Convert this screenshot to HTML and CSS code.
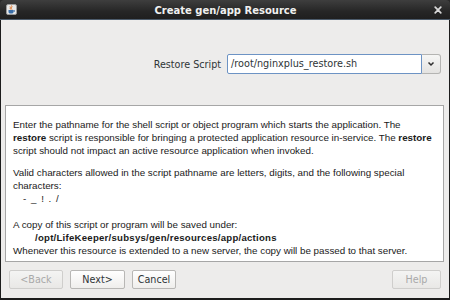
FILE: index.html
```html
<!DOCTYPE html>
<html>
<head>
<meta charset="utf-8">
<link rel="stylesheet" href="styles.css">
</head>
<body>
<div class="window">
  <div class="titlebar">
    <div class="app-icon">
      <svg width="11" height="11" viewBox="0 0 11 11">
        <rect x="0.5" y="0.5" width="10" height="10" rx="1.5" fill="#e8e8e8" stroke="#9a9a9a"/>
        <path d="M5.5 1.5 C7 3 4 4 6 5.5 M4 2.5 C5 4 3.5 4.5 4.8 5.5" stroke="#e07020" stroke-width="1" fill="none"/>
        <path d="M2.5 6 H7.5 V8 C7.5 9 6.5 9.5 5 9.5 C3.5 9.5 2.5 9 2.5 8 Z" fill="#3a6ea8"/>
        <path d="M7.5 6.5 H8.5 V7.5 H7.5" stroke="#3a6ea8" stroke-width="0.8" fill="none"/>
      </svg>
    </div>
    <div class="title">Create gen/app Resource</div>
    <div class="close">
      <svg width="8" height="8" viewBox="0 0 8 8">
        <path d="M1.2 1.2 L6.8 6.8 M6.8 1.2 L1.2 6.8" stroke="#d8d8d8" stroke-width="1.7" stroke-linecap="round"/>
      </svg>
    </div>
  </div>
  <div class="content">
    <div class="field-row">
      <span class="field-label">Restore Script</span>
      <div class="combo">
        <div class="combo-input">/root/nginxplus_restore.sh</div>
        <div class="combo-btn">
          <svg width="8" height="6" viewBox="0 0 8 6">
            <path d="M1.5 1.5 L4 4 L6.5 1.5" stroke="#2e2e2e" stroke-width="1.5" fill="none"/>
          </svg>
        </div>
      </div>
    </div>
    <div class="info">
      <p class="para p1">Enter the pathname for the shell script or object program which starts the application. The<br><b>restore</b> script is responsible for bringing a protected application resource in-service. The <b>restore</b><br>script should not impact an active resource application when invoked.</p>
      <p class="para p2">Valid characters allowed in the script pathname are letters, digits, and the following special<br>characters:<br><span class="chars">- _ ! . /</span></p>
      <p class="para p3">A copy of this script or program will be saved under:<br><b class="path">/opt/LifeKeeper/subsys/gen/resources/app/actions</b><br>Whenever this resource is extended to a new server, the copy will be passed to that server.</p>
    </div>
    <div class="buttons">
      <div class="btn disabled back">&lt;Back</div>
      <div class="btn next">Next&gt;</div>
      <div class="btn cancel">Cancel</div>
      <div class="spacer"></div>
      <div class="btn disabled help">Help</div>
    </div>
  </div>
</div>
</body>
</html>
```

FILE: styles.css
```css
html, body {
  margin: 0;
  padding: 0;
  width: 450px;
  height: 300px;
  overflow: hidden;
  background: #2a2a2a;
}

.window {
  width: 450px;
  height: 300px;
  box-sizing: border-box;
  display: flex;
  flex-direction: column;
  background: #1c1c1c;
  border-radius: 4px 4px 0 0;
  padding: 0 1px 2px 1px;
}

.titlebar {
  height: 20px;
  flex: none;
  display: flex;
  align-items: center;
  background: linear-gradient(#3e3e3e, #262626 60%, #1f1f1f);
  border-bottom: 1px solid #4d5c6c;
  box-sizing: border-box;
  border-radius: 4px 4px 0 0;
  margin: 0 -1px;
  padding: 0 6px 0 6px;
}

.app-icon {
  width: 11px;
  height: 11px;
  display: flex;
}

.title {
  flex: 1;
  text-align: center;
  color: #f0f0f0;
  font-family: "DejaVu Sans", sans-serif;
  font-weight: bold;
  font-size: 10px;
  padding-top: 1px;
}

.close {
  width: 8px;
  height: 8px;
  display: flex;
  margin-right: 2px;
}

.content {
  flex: 1;
  background: #edeceb;
  display: flex;
  flex-direction: column;
  font-family: "DejaVu Sans", sans-serif;
}

.field-row {
  margin-top: 34px;
  height: 20px;
  display: flex;
  justify-content: flex-end;
  align-items: center;
  padding-right: 8px;
}

.field-label {
  font-size: 9.6px;
  color: #2e3436;
  margin-right: 6px;
}

.combo {
  display: flex;
  height: 20px;
}

.combo-input {
  width: 195px;
  height: 20px;
  box-sizing: border-box;
  border: 1px solid #6d93c4;
  border-radius: 2px 0 0 2px;
  background: #ffffff;
  font-size: 9.7px;
  color: #2e3436;
  padding-left: 3px;
  line-height: 18px;
}

.combo-btn {
  width: 19px;
  height: 20px;
  box-sizing: border-box;
  border: 1px solid #b4b4b2;
  border-left: none;
  border-radius: 0 3px 3px 0;
  background: linear-gradient(#f6f6f5, #e4e3e1);
  display: flex;
  align-items: center;
  justify-content: center;
}

.info {
  margin: 31px 5px 0 4px;
  height: 157px;
  box-sizing: border-box;
  border: 1px solid #a6a6a6;
  background: #ffffff;
  padding: 12px 6px 0 7px;
  font-family: "Liberation Sans", sans-serif;
  font-size: 9.8px;
  line-height: 13px;
  color: #1a1a1a;
  white-space: nowrap;
  overflow: hidden;
}

.para {
  margin: 0;
}

.p2 {
  margin-top: 9px;
}

.p3 {
  margin-top: 13px;
}

.chars {
  padding-left: 10px;
  letter-spacing: 1px;
}

.path {
  display: inline-block;
  padding-left: 22px;
  font-size: 9.6px;
  letter-spacing: 0.25px;
}

.buttons {
  display: flex;
  margin: 8px 8px 0 8px;
  height: 19px;
}

.btn {
  height: 19px;
  box-sizing: border-box;
  border: 1px solid #b8b7b5;
  border-radius: 2px;
  background: linear-gradient(#ffffff, #efeeec);
  font-size: 9.6px;
  color: #2e3436;
  display: flex;
  align-items: center;
  justify-content: center;
  margin-right: 7px;
}

.btn.disabled {
  color: #a9a9a9;
  border-color: #cfcecc;
  background: linear-gradient(#f4f4f3, #e9e8e6);
}

.back { width: 54px; }
.next { width: 55px; }
.cancel { width: 44px; }
.help { width: 49px; margin-right: 0; }

.spacer {
  flex: 1;
}
```
